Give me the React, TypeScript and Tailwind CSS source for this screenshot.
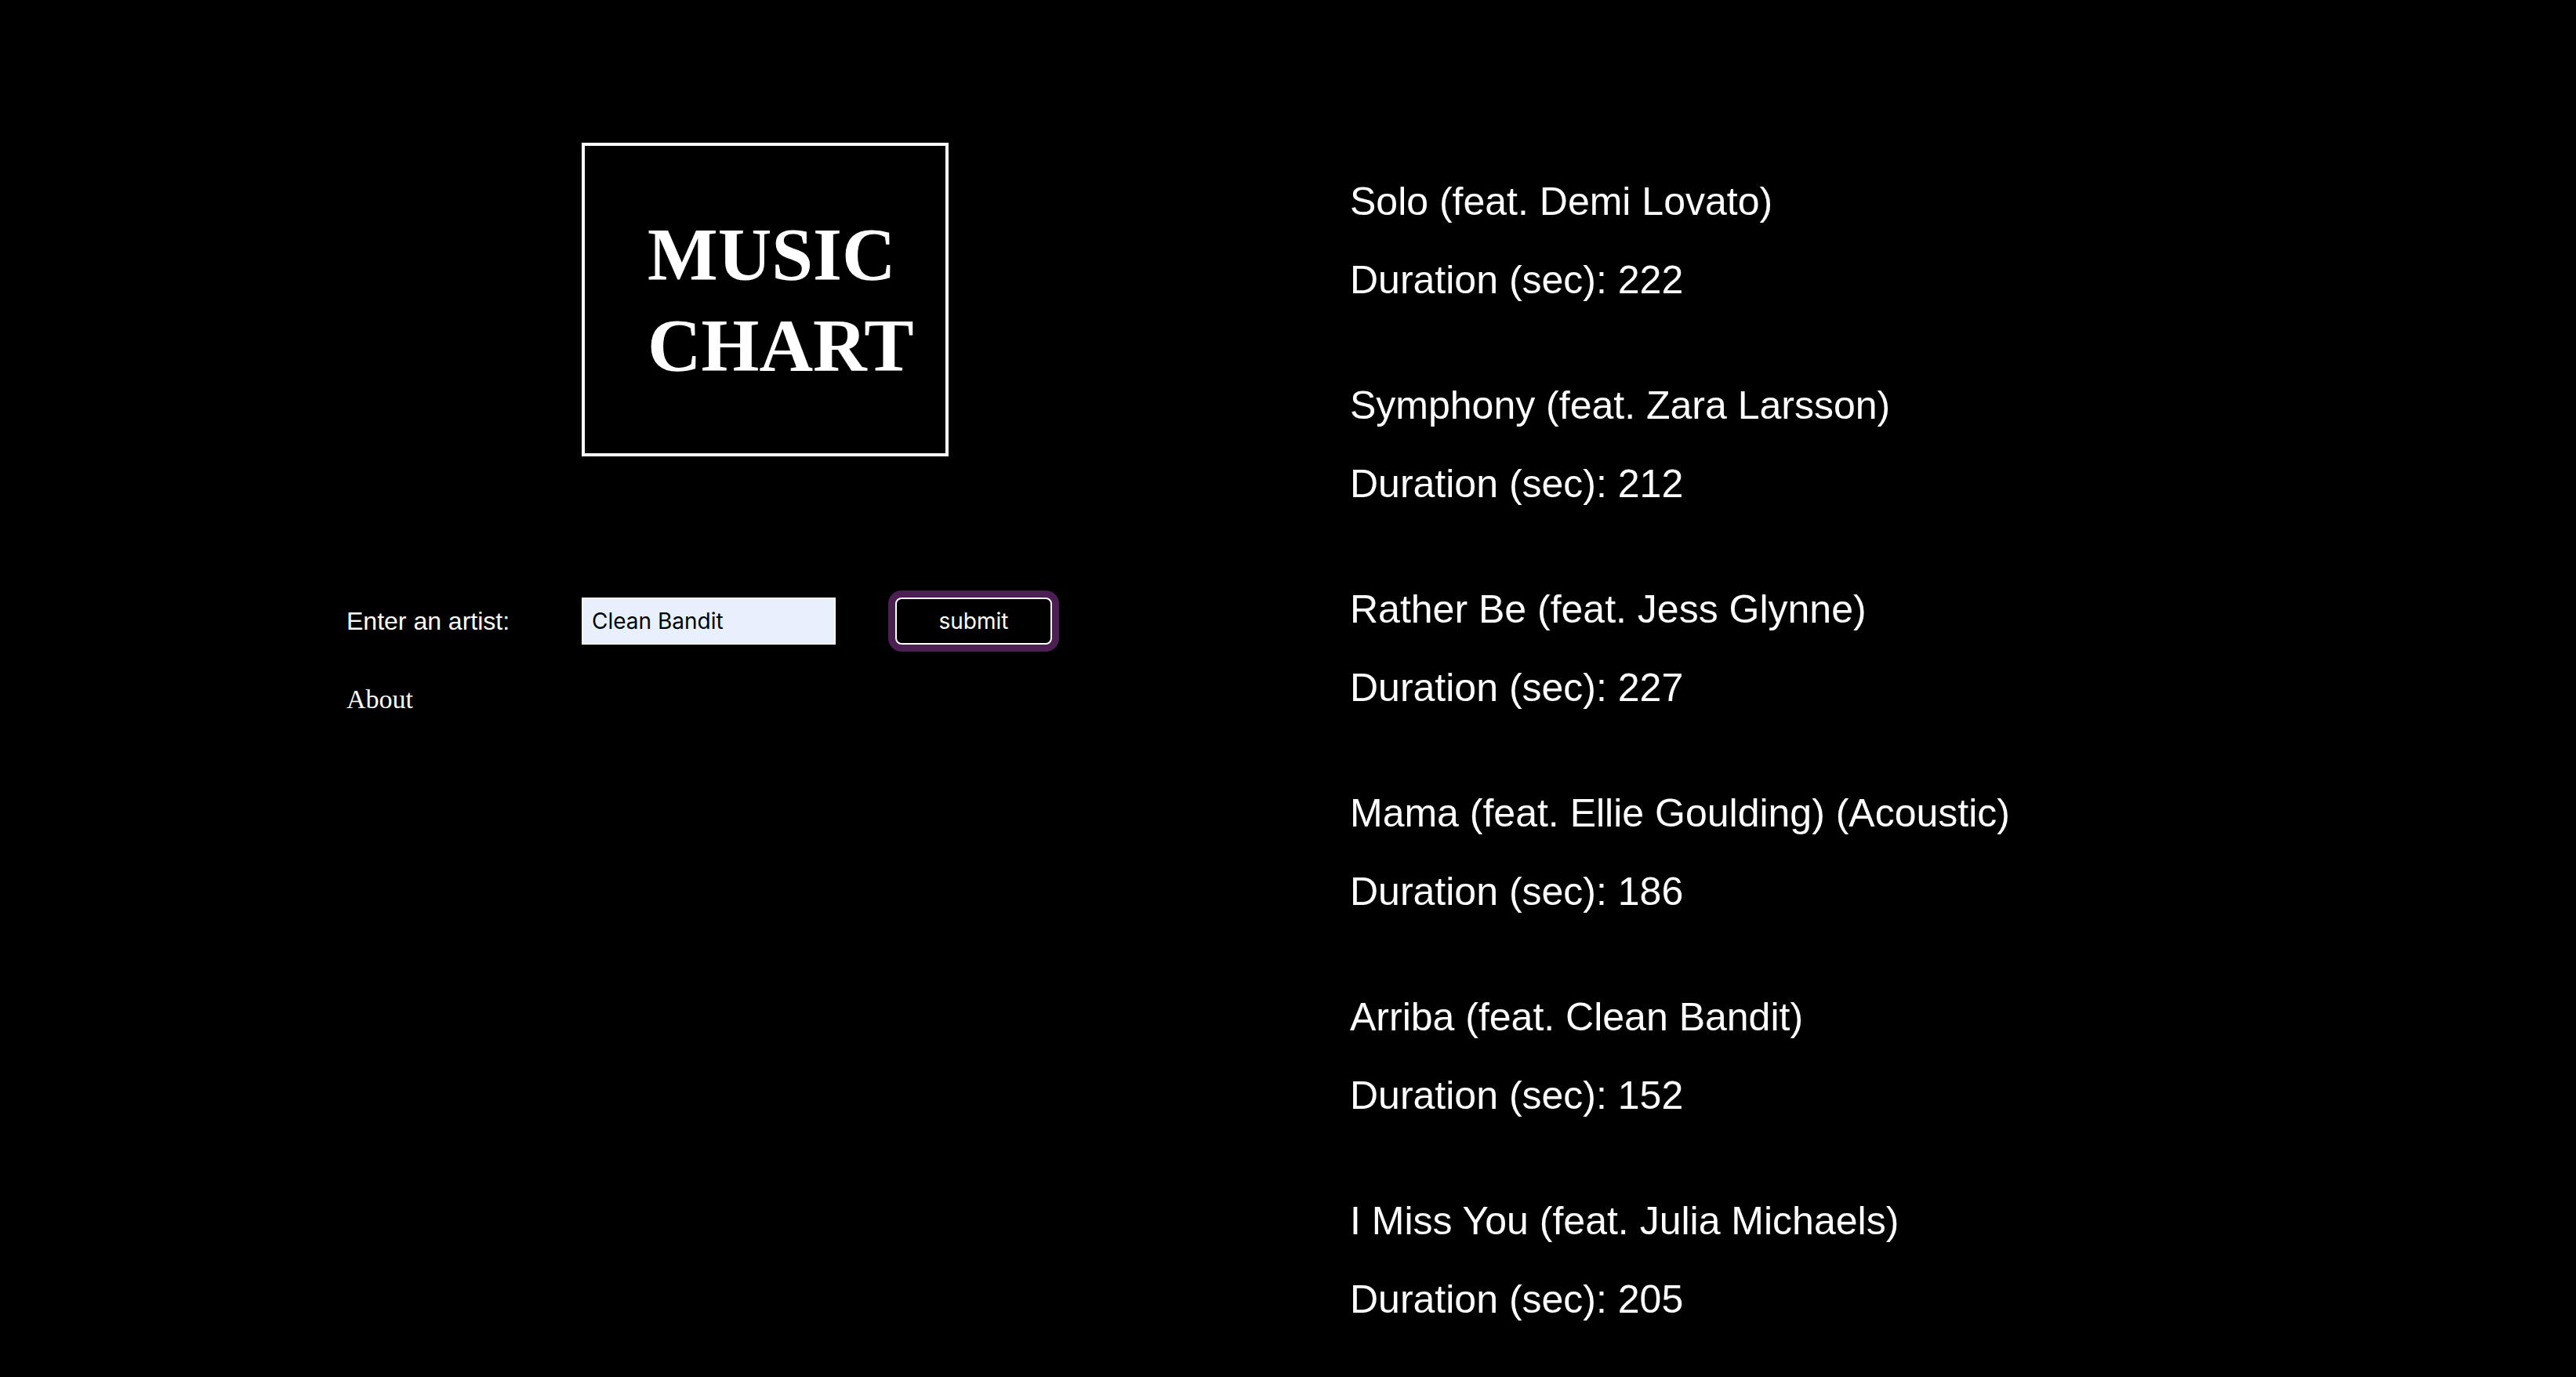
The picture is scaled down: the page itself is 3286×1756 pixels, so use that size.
import React from "react";

const songs = [
  { title: "Solo (feat. Demi Lovato)", duration: 222 },
  { title: "Symphony (feat. Zara Larsson)", duration: 212 },
  { title: "Rather Be (feat. Jess Glynne)", duration: 227 },
  { title: "Mama (feat. Ellie Goulding) (Acoustic)", duration: 186 },
  { title: "Arriba (feat. Clean Bandit)", duration: 152 },
  { title: "I Miss You (feat. Julia Michaels)", duration: 205 },
];

export default function App() {
  return (
    <div className="min-h-screen w-full bg-black text-white flex">
      <div className="w-[1722px] shrink-0 pl-[442px] pt-[182px] flex flex-col">
        <div className="ml-[300px] w-[468px] h-[400px] border-4 border-white pl-[80px] pt-[81px]">
          <div className="font-['Liberation_Serif',serif] font-bold text-[95px] leading-[116px] whitespace-nowrap">
            <div>MUSIC</div>
            <div>CHART</div>
          </div>
        </div>
        <div className="mt-[180px] flex items-center h-[60px]">
          <label className="w-[300px] shrink-0 font-['Liberation_Sans',Arial,sans-serif] text-[32px] leading-[37px]">
            Enter an artist:
          </label>
          <input
            type="text"
            defaultValue="Clean Bandit"
            className="w-[324px] h-[60px] shrink-0 border-2 border-white bg-[#e8f0fe] text-black pl-[11px] font-['Inter',sans-serif] text-[28px] outline-none"
          />
          <button className="ml-[76px] w-[200px] h-[60px] shrink-0 rounded-[8px] border-2 border-white bg-black text-white font-['Inter',sans-serif] text-[28px] ring-[9px] ring-[#4b1f51]">
            submit
          </button>
        </div>
        <div className="mt-[50px] font-['Liberation_Serif',serif] text-[34px] leading-[39px]">
          About
        </div>
      </div>
      <div className="flex flex-col pt-[227px] font-['Liberation_Sans',Arial,sans-serif] text-[50px] leading-[60px] whitespace-nowrap">
        {songs.map((s, i) => (
          <div key={i} className={i > 0 ? "mt-[100px]" : ""}>
            <div>{s.title}</div>
            <div className="mt-[40px]">Duration (sec): {s.duration}</div>
          </div>
        ))}
      </div>
    </div>
  );
}
